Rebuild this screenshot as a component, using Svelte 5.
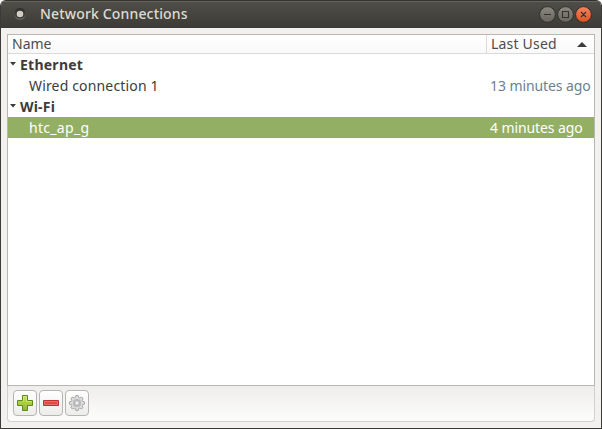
<script>
  const groups = [
    { name: 'Ethernet', sp: 0.25, items: [{ name: 'Wired connection 1', used: '13 minutes ago', sp: 0.16, up: -0.09 }] },
    { name: 'Wi-Fi', sp: 0.2, items: [{ name: 'htc_ap_g', used: '4 minutes ago', selected: true, sp: 0.3, up: -0.1 }] }
  ];
</script>

<div class="window">
  <header class="titlebar">
    <svg class="appicon" width="14" height="14" viewBox="0 0 14 14">
      <defs><linearGradient id="ring" x2="0" y2="1"><stop stop-color="#2a2a26" /><stop offset="1" stop-color="#686660" /></linearGradient></defs>
      <circle cx="7" cy="7" r="6" fill="url(#ring)" />
      <circle cx="7" cy="6.8" r="4.7" fill="#373632" />
      <circle cx="7" cy="7" r="3.3" fill="#d0cdc7" />
    </svg>
    <h1>Network Connections</h1>
    <svg class="controls" width="54" height="18" viewBox="0 0 54 18">
      <defs>
        <linearGradient id="grey" x2="0" y2="1"><stop stop-color="#8b8980" /><stop offset="1" stop-color="#66645c" /></linearGradient>
        <linearGradient id="red" x2="0" y2="1"><stop stop-color="#f58461" /><stop offset="1" stop-color="#e0501f" /></linearGradient>
      </defs>
      <g stroke="#30302b">
        <circle cx="9.5" cy="8.5" r="7.9" fill="url(#grey)" />
        <circle cx="27.5" cy="8.5" r="7.9" fill="url(#grey)" />
        <circle cx="45.5" cy="8.5" r="7.9" fill="url(#red)" />
      </g>
      <path d="M6 8.5h7M24.5 5.5h6v6h-6zM43 6l5 5M48 6l-5 5" fill="none" stroke="#33322e" stroke-width="1.1" />
    </svg>
  </header>
  <main>
    <div class="tree">
      <div class="head">
        <div class="col name">Name</div>
        <div class="col used"><span>Last Used</span><svg width="10" height="5"><path d="M0 5L5 0l5 5z" fill="#3c3c3c" /></svg></div>
      </div>
      {#each groups as g}
        <div class="row group"><svg width="6" height="4"><path d="M0 0h6L3 3.5z" fill="#3c3c3c" /></svg><b style:letter-spacing="{g.sp}px">{g.name}</b></div>
        {#each g.items as c}
          <div class="row item" class:selected={c.selected}>
            <span class="label" style:letter-spacing="{c.sp}px">{c.name}</span>
            <span class="time" style:letter-spacing="{c.up}px">{c.used}</span>
          </div>
        {/each}
      {/each}
    </div>
    <div class="toolbar">
      <button aria-label="Add">
        <svg width="16" height="16" viewBox="0 0 16 16"><defs><linearGradient id="gr" x2="0" y2="1"><stop stop-color="#c5e25e" /><stop offset="1" stop-color="#94b62a" /></linearGradient></defs><path d="M5.5.5h5v5h5v5h-5v5h-5v-5h-5v-5h5z" fill="url(#gr)" stroke="#5c8a16" stroke-linejoin="round" /><path d="M6.5 6.5v-5h3v5h5" fill="none" stroke="#dcef96" stroke-opacity=".6" /></svg>
      </button>
      <button aria-label="Remove">
        <svg width="16" height="16" viewBox="0 0 16 16"><path d="M.5 5.5h15v5H.5z" fill="#dc4a4a" stroke="#b53535" /><path d="M1.5 9.5v-3h13v3z" fill="none" stroke="#e86e6e" /></svg>
      </button>
      <button aria-label="Settings">
        <svg width="16" height="16" viewBox="0 0 16 16">
          <path d="M6.8.5h2.4l.4 2 1.3.5L12.6 2l1.5 1.5-1 1.7.4 1.2 2 .4v2.4l-2 .4-.4 1.2 1 1.7-1.5 1.5-1.7-1-1.3.5-.4 2H6.8l-.4-2-1.3-.5-1.7 1-1.5-1.5 1-1.7-.4-1.2-2-.4V6.8l2-.4.4-1.2-1-1.7L3.4 2l1.7 1 1.3-.5z" fill="#dedede" stroke="#a0a0a0" stroke-width=".9" />
          <circle cx="8" cy="8" r="3.2" fill="none" stroke="#b8b8b8" stroke-width="1.8" /><circle cx="8" cy="8" r="1.9" fill="#f4f4f4" stroke="#aaa" stroke-width=".6" />
        </svg>
      </button>
    </div>
  </main>
</div>

<style>
  :global(body) { background: #fff; }
  .window { box-sizing: border-box; width: 602px; height: 429px; border: 1px solid #3c3b37; border-top: 0; border-radius: 6px 6px 0 0; background: #f2f1f0; overflow: hidden; font: 14px/21px "Noto Sans", sans-serif; color: #3c3c3c; display: flex; flex-direction: column; }
  .titlebar { box-sizing: border-box; height: 28px; flex: none; display: flex; align-items: center; padding: 0 9px 0 12px; background: linear-gradient(#4f4e48, #3c3b37); border-top: 1px solid #33322e; box-shadow: inset 0 1px #66655f; }
  .appicon { margin-top: -1px; }
  h1 { margin: 0 auto 0 13px; font-size: 14px; line-height: 25px; height: 27px; font-weight: 500; letter-spacing: .16px; color: #dfdbd2; }
  main { flex: 1; display: flex; flex-direction: column; margin: 6px 6px; }
  .tree { box-sizing: border-box; height: 352px; border: 1px solid #bab6b2; background: #fff; }
  .head { display: flex; height: 18px; line-height: 18px; border-bottom: 1px solid #dcdad8; background: linear-gradient(#fff, #f9f9f9); color: #4c4c4c; }
  .col { box-sizing: border-box; height: 18px; }
  .name { width: 479px; padding-left: 4px; border-right: 1px solid #dcdad8; }
  .used { flex: 1; display: flex; align-items: center; justify-content: space-between; padding: 0 7px 0 4px; letter-spacing: .2px; }
  .row { display: flex; align-items: center; height: 21px; white-space: nowrap; }
  .group { padding-left: 2px; gap: 4px; }
  .group svg { margin-top: -2px; }
  .item { padding-left: 21px; }
  .label { width: 461px; }
  .time { color: #6d7f8d; }
  .selected, .selected .time { background: #92af64; color: #fff; }
  .toolbar { flex: 1; display: flex; padding: 4px 4px; border: 1px solid #d3cfcc; border-top: 0; border-radius: 0 0 4px 4px; background: linear-gradient(#eeedeb, #fdfdfd); }
  button { box-sizing: border-box; width: 24px; height: 26px; margin: 0 1px; padding: 0; display: flex; align-items: center; justify-content: center; border: 1px solid #b7b4b1; border-radius: 4px; background: linear-gradient(#fff, #ececeb); }
</style>
